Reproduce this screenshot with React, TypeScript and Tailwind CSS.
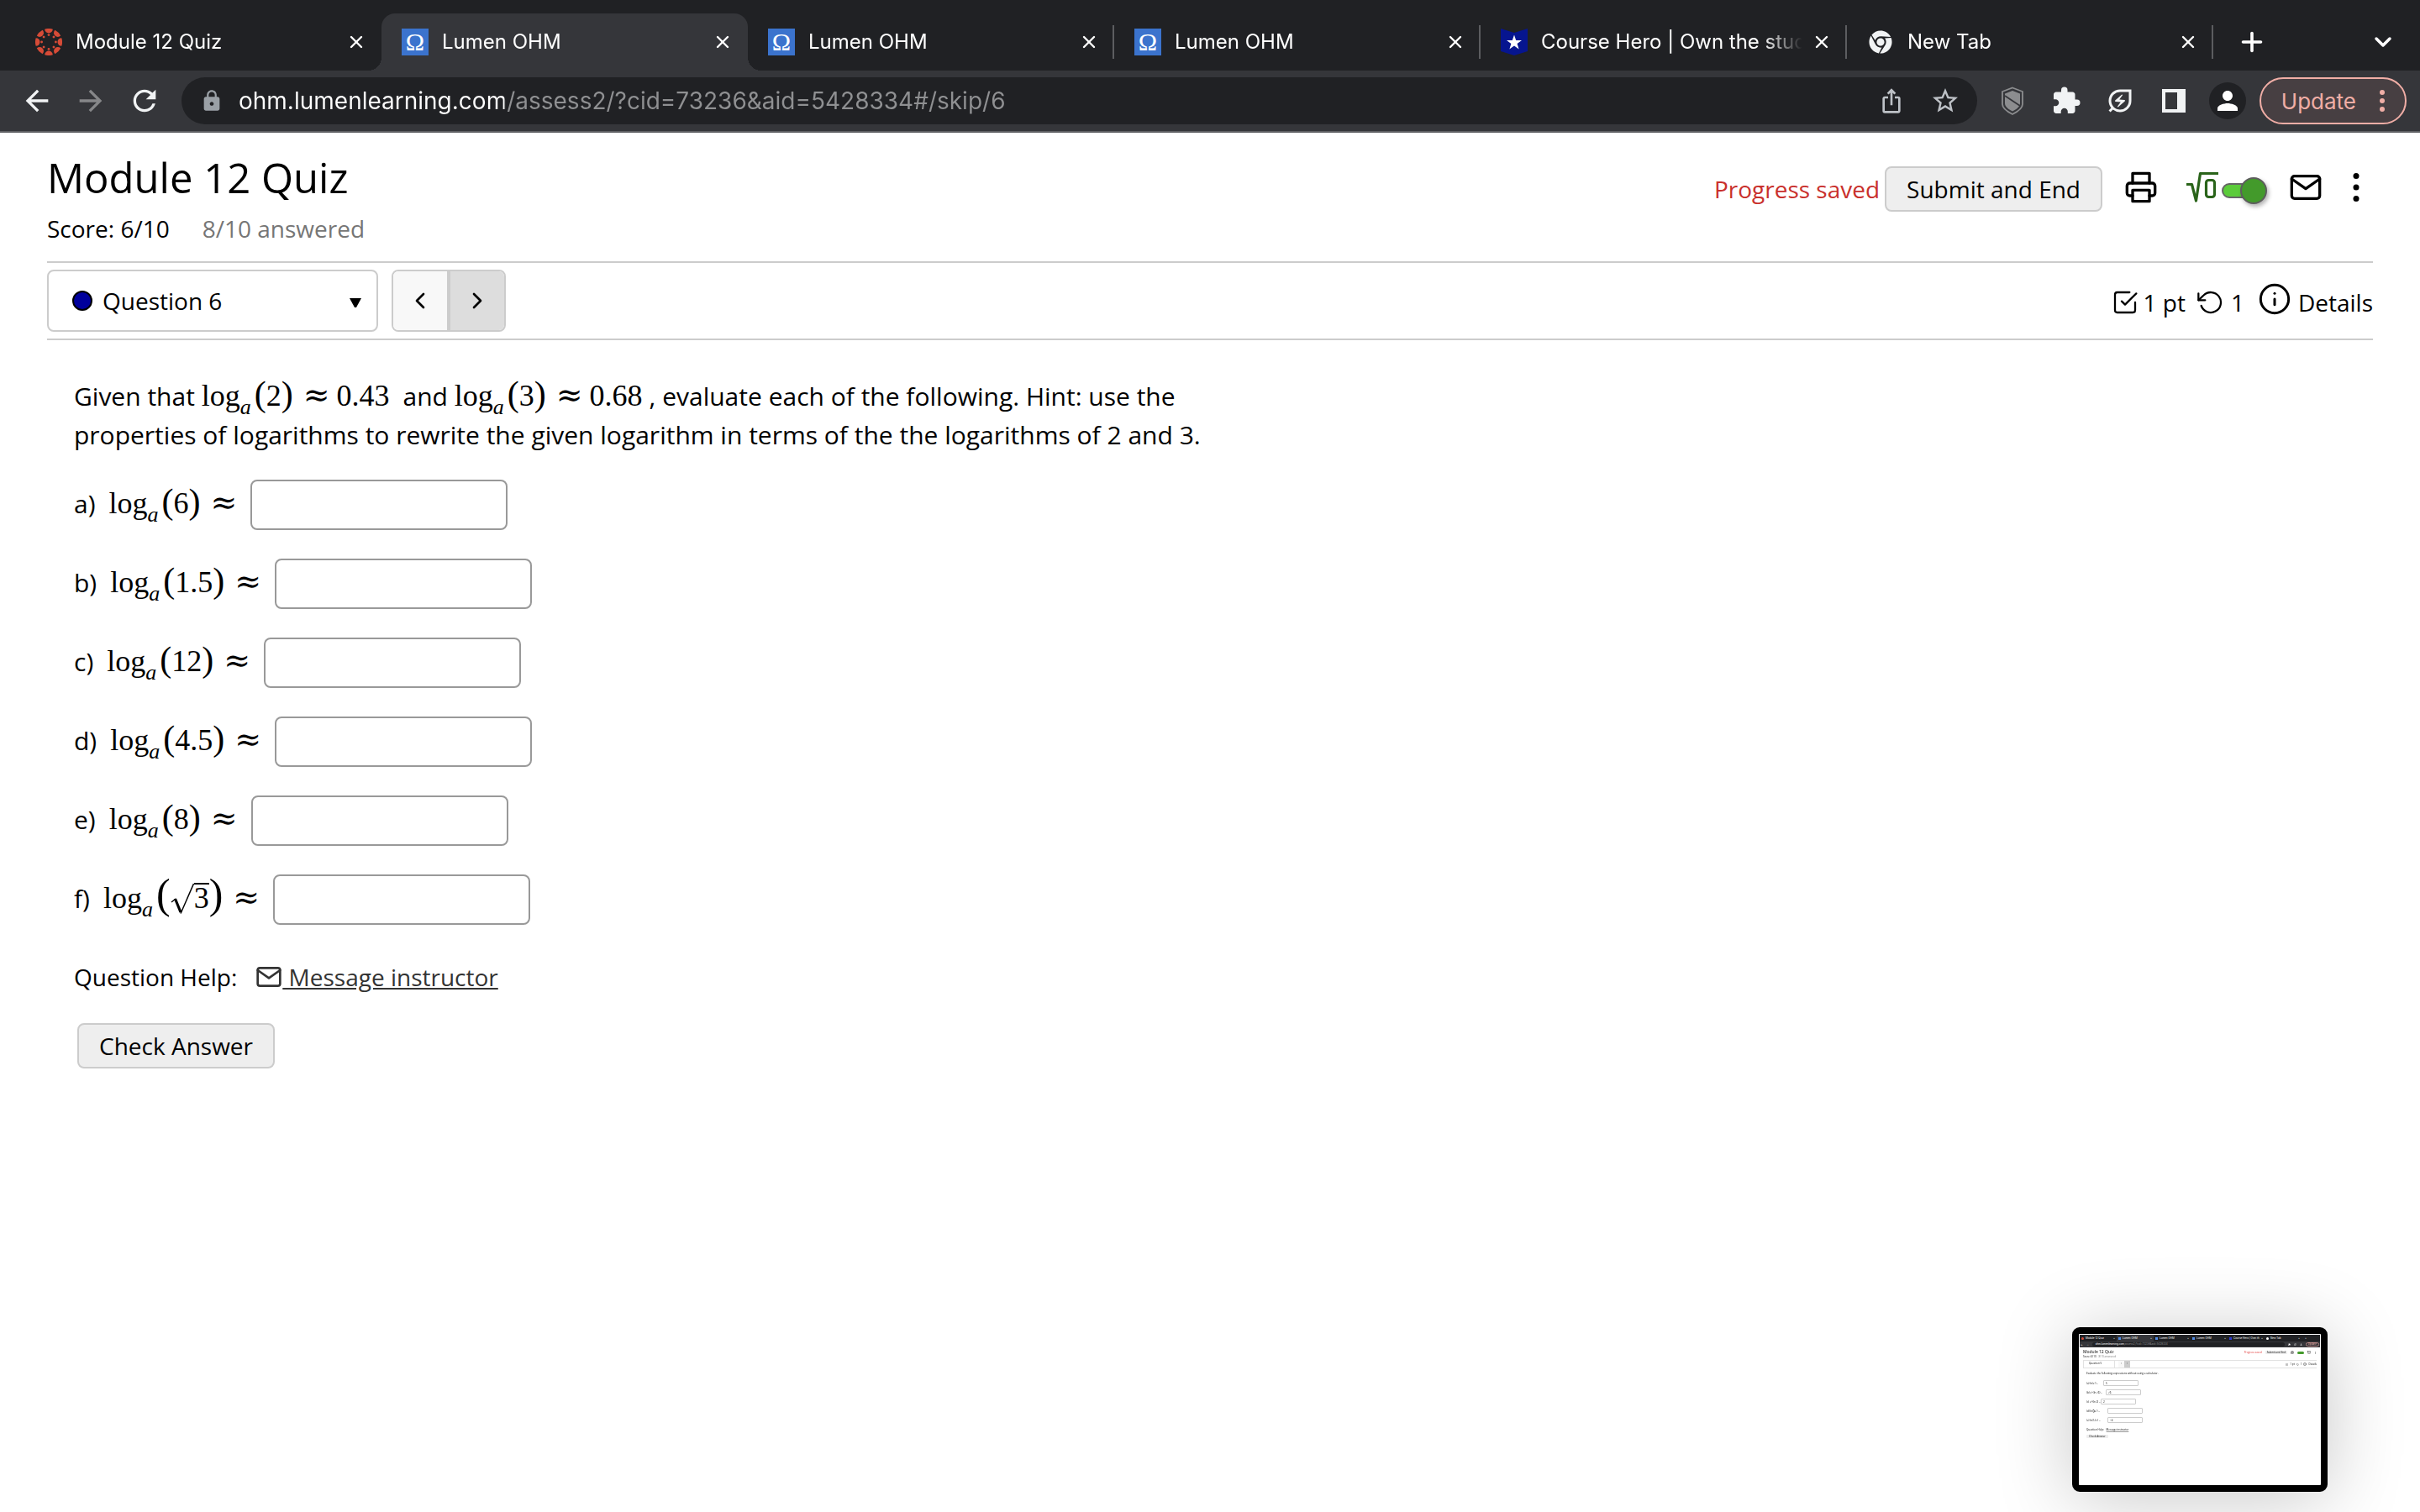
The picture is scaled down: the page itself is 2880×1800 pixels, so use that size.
import type { ReactNode } from "react";
import clsx from "clsx";
import { FaChrome } from "react-icons/fa";
import { FiCheckSquare, FiInfo, FiMail, FiPrinter, FiRotateCcw } from "react-icons/fi";
import {
  MdArrowBack,
  MdArrowForward,
  MdExtension,
  MdIosShare,
  MdLock,
  MdOutlineEnergySavingsLeaf,
  MdPerson,
  MdRefresh,
  MdStarBorder,
} from "react-icons/md";
import { ChevronDown, ChevronLeft, ChevronRight, Plus, X } from "lucide-react";

type TabType = {
  title: string;
  icon: "canvas" | "omega" | "hero" | "chrome";
  active?: boolean;
};

const tabs: TabType[] = [
  { title: "Module 12 Quiz", icon: "canvas" },
  { title: "Lumen OHM", icon: "omega", active: true },
  { title: "Lumen OHM", icon: "omega" },
  { title: "Lumen OHM", icon: "omega" },
  { title: "Course Hero | Own the stud", icon: "hero" },
  { title: "New Tab", icon: "chrome" },
];

const parts: { label: string; arg: ReactNode; tall?: boolean }[] = [
  { label: "a", arg: "6" },
  { label: "b", arg: "1.5" },
  { label: "c", arg: "12" },
  { label: "d", arg: "4.5" },
  { label: "e", arg: "8" },
  { label: "f", arg: <Root>3</Root>, tall: true },
];

function CanvasLogo() {
  const angles = [0, 45, 90, 135, 180, 225, 270, 315];
  return (
    <svg viewBox="-16 -16 32 32" className="size-8 shrink-0 fill-[#d64b37]">
      {angles.map((a) => (
        <g key={a} transform={`rotate(${a})`}>
          <path d="M-4.8 -15.3A16 16 0 0 1 4.8 -15.3A4.8 4.8 0 0 1 -4.8 -15.3Z" />
          <circle cx="0" cy="-8.4" r="1.4" />
        </g>
      ))}
    </svg>
  );
}

function Favicon({ icon }: { icon: TabType["icon"] }) {
  if (icon === "canvas") return <CanvasLogo />;
  if (icon === "chrome")
    return <FaChrome className="size-7 mx-0.5 shrink-0 text-[#f1f3f4]" />;
  if (icon === "hero")
    return (
      <svg viewBox="0 0 32 32" className="size-8 shrink-0">
        <path d="M0 0L16 5L32 0V27L16 32L0 27Z" fill="#06158f" />
        <path
          d="M16 7.500L18.200 14H25L19.600 18L21.600 24.500L16 20.600L10.400 24.500L12.400 18L7 14H13.800Z"
          fill="#fff"
        />
      </svg>
    );
  return (
    <span className="size-8 shrink-0 bg-[#3b73cd] text-white text-[30px] leading-8 text-center font-['Liberation_Serif',serif]">
      Ω
    </span>
  );
}

function Tab({ tab, divider }: { tab: TabType; divider: boolean }) {
  return (
    <div
      className={clsx(
        "relative flex-1 max-w-[436px] min-w-0 flex items-center pl-6 text-white",
        tab.active && "bg-[#35363a] rounded-t-2xl"
      )}
    >
      {tab.active && (
        <>
          <span className="absolute bottom-0 -left-4 size-4 bg-[radial-gradient(circle_at_0_0,transparent_16px,#35363a_16px)]" />
          <span className="absolute bottom-0 -right-4 size-4 bg-[radial-gradient(circle_at_100%_0,transparent_16px,#35363a_16px)]" />
        </>
      )}
      <Favicon icon={tab.icon} />
      <span className="flex-1 min-w-0 ml-4 mr-2 whitespace-nowrap text-2xl [mask-image:linear-gradient(to_right,black_84%,transparent_99%)]">
        {tab.title}
      </span>
      <button aria-label="Close tab">
        <X className="size-6" strokeWidth={2.4} />
      </button>
      <span className={clsx("ml-4 w-0.5 h-10", divider && "bg-[#5c5d60]")} />
    </div>
  );
}

function BrowserBar() {
  return (
    <header className="font-[Inter,sans-serif]">
      <div className="flex h-[84px] pt-4 pl-[18px] pr-7 bg-[#202124]">
        {tabs.map((tab, i) => (
          <Tab key={i} tab={tab} divider={i > 1} />
        ))}
        <button className="ml-7 text-white" aria-label="New tab">
          <Plus className="size-9" strokeWidth={2.4} />
        </button>
        <button className="ml-auto text-white" aria-label="Search tabs">
          <ChevronDown className="size-8" strokeWidth={2.6} />
        </button>
      </div>
      <div className="flex items-center h-[74px] px-4 bg-[#35363a] border-b-2 border-[#5f6063] text-[#f1f3f4]">
        <nav className="flex items-center gap-6 px-2 text-[40px]">
          <button aria-label="Back">
            <MdArrowBack />
          </button>
          <button aria-label="Forward" className="text-[#868789]">
            <MdArrowForward />
          </button>
          <button aria-label="Reload">
            <MdRefresh />
          </button>
        </nav>
        <div className="flex-1 flex items-center h-14 ml-4 pl-5 pr-5 rounded-full bg-[#202124] text-[#bdc1c6]">
          <MdLock className="size-7 ml-0.5 text-[#9aa0a6]" />
          <input
            type="text"
            aria-label="Address and search bar"
            defaultValue="ohm.lumenlearning.com/assess2/?cid=73236&aid=5428334#/skip/6"
            className="flex-1 h-14 ml-4.5 text-[28px] outline-none text-transparent bg-clip-text bg-[linear-gradient(to_right,white_316px,#8f9092_316px)]"
          />
          <button aria-label="Share">
            <MdIosShare className="size-8" />
          </button>
          <button aria-label="Bookmark" className="ml-7.5">
            <MdStarBorder className="size-9" />
          </button>
        </div>
        <div className="flex items-center gap-7 ml-6">
          <button aria-label="Shield">
            <svg viewBox="0 0 36 36" className="size-9">
              <path
                d="M18 2.500L30 7V22C30 27 24 31 18 34C12 31 6 27 6 22V7Z"
                fill="none"
                stroke="#8c8d8f"
                strokeWidth="1.800"
              />
              <path d="M18 6L27 9.400V21C27 25 23 28 18 30.500C13 28 9 25 9 21V9.400Z" fill="#8c8d8f" />
              <path d="M9 12L27 24" stroke="#35363a" strokeWidth="1.800" />
            </svg>
          </button>
          <button aria-label="Extensions">
            <MdExtension className="size-9" />
          </button>
          <button aria-label="Energy saver">
            <MdOutlineEnergySavingsLeaf className="size-9" />
          </button>
          <button aria-label="Side panel">
            <svg viewBox="0 0 36 36" className="size-9">
              <path d="M4 4H32V32H4ZM8 8V28H22V8Z" fill="#f1f3f4" fillRule="evenodd" />
            </svg>
          </button>
        </div>
        <button
          aria-label="Profile"
          className="flex items-center justify-center size-11 ml-6 rounded-full bg-[#202124] text-white"
        >
          <MdPerson className="size-9" />
        </button>
        <button className="flex items-center gap-7 h-14 ml-4 px-6 rounded-full border-2 border-[#f0aea6] bg-[#473f42] text-[#f0aea6] text-[26px]">
          Update
          <svg viewBox="0 0 6 28" className="w-1.5 h-7 fill-current">
            <circle cx="3" cy="4" r="3" />
            <circle cx="3" cy="14" r="3" />
            <circle cx="3" cy="24" r="3" />
          </svg>
        </button>
      </div>
    </header>
  );
}

function Root({ children }: { children: ReactNode }) {
  return (
    <span className="inline-flex items-baseline">
      <svg viewBox="0 0 28 38" className="self-end w-7 h-[38px] -mb-1" fill="none" stroke="currentColor">
        <path d="M1 23L6 19" strokeWidth="1.500" />
        <path d="M5.500 19L12 35" strokeWidth="3.200" />
        <path d="M12 36.500L27.500 1" strokeWidth="1.500" />
      </svg>
      <span className="border-t-2 border-black leading-8">{children}</span>
    </span>
  );
}

function Log({ children, tall }: { children: ReactNode; tall?: boolean }) {
  const paren = tall ? "text-[50px]" : "text-[42px]";
  return (
    <span className="inline-flex items-baseline leading-8 whitespace-nowrap font-['Liberation_Serif',serif] text-4xl">
      log
      <sub className="relative top-2.5 bottom-auto leading-none text-[26px] italic">a</sub>
      <span className={clsx("ml-1 leading-8", paren)}>(</span>
      {children}
      <span className={clsx("leading-8", paren)}>)</span>
      <span className="ml-3 font-['DejaVu_Serif',serif] text-[38px] leading-8">≈</span>
    </span>
  );
}

function Toolbar() {
  return (
    <div className="flex items-center text-[28px]">
      <span className="text-[#c9302c]">Progress saved</span>
      <button className="h-[54px] ml-1.5 px-6 rounded-lg border-2 border-[#ccc] bg-[#eee]">
        Submit and End
      </button>
      <button aria-label="Print" className="ml-6.5 pb-1">
        <FiPrinter className="size-10" />
      </button>
      <label className="flex items-center ml-8.5 pb-1">
        <svg viewBox="0 0 38 38" className="size-[38px]" fill="none" stroke="#2a641a" strokeWidth="3.200">
          <path d="M0 15.500H6.500L11.500 35L16.500 2.500H38" strokeLinejoin="round" />
          <rect x="23.500" y="10.500" width="10" height="20" rx="3" />
        </svg>
        <input
          type="checkbox"
          role="switch"
          defaultChecked
          aria-label="Enhanced math entry"
          className="sr-only"
        />
        <span className="flex items-center justify-end w-[46px] h-[18px] mt-2 ml-1 rounded-full border-2 border-[#666] bg-[#5bcb3a]">
          <span className="size-8 -mr-2.5 shrink-0 rounded-full border-2 border-[#5d5d5d] bg-[#439a2b] shadow-[2px_3px_5px_rgba(0,0,0,0.3)]" />
        </span>
      </label>
      <button aria-label="Messages" className="ml-8.5 pb-1">
        <FiMail className="size-10" />
      </button>
      <button aria-label="More options" className="ml-9 mr-4 pb-1">
        <svg viewBox="0 0 8 36" className="w-2 h-9 fill-black">
          <circle cx="4" cy="4.500" r="3.500" />
          <circle cx="4" cy="18" r="3.500" />
          <circle cx="4" cy="31.500" r="3.500" />
        </svg>
      </button>
    </div>
  );
}

function QuestionNav() {
  return (
    <div className="flex items-center h-[94px] border-y-2 border-[#ccc] text-[28px]">
      <div className="relative">
        <select
          aria-label="Question"
          className="w-[394px] h-[74px] pl-16 rounded-lg border-2 border-[#ccc] bg-white appearance-none"
        >
          <option>Question 6</option>
        </select>
        <span className="absolute left-[30px] top-[25px] size-6 rounded-full border-2 border-black bg-[#00009c] pointer-events-none" />
        <svg viewBox="0 0 14 11" className="absolute right-5 top-[34px] w-3.5 pointer-events-none">
          <path d="M0 0H14L8 11H6Z" />
        </svg>
      </div>
      <div className="flex ml-4 h-[74px] rounded-lg border-2 border-[#ccc] overflow-hidden">
        <button
          aria-label="Previous question"
          className="flex items-center justify-center w-[68px] bg-[#f8f8f8] border-r-4 border-[#ccc]"
        >
          <ChevronLeft className="size-8" strokeWidth={2} />
        </button>
        <button
          aria-label="Next question"
          className="flex items-center justify-center w-[64px] bg-[#ddd]"
        >
          <ChevronRight className="size-8" strokeWidth={2} />
        </button>
      </div>
      <div className="flex items-center ml-auto pt-1">
        <FiCheckSquare className="size-8" strokeWidth={1.7} />
        <span className="ml-1.5">1 pt</span>
        <FiRotateCcw className="size-8 ml-3.5" strokeWidth={1.7} />
        <span className="ml-2">1</span>
        <button className="flex items-center ml-4">
          <FiInfo className="size-10 mb-2" strokeWidth={1.8} />
          <span className="ml-2">Details</span>
        </button>
      </div>
    </div>
  );
}

function MiniRow({ label, value, className }: { label: string; value?: string; className: string }) {
  return (
    <div className="flex items-center h-[11px] gap-1">
      <span className={className}>{label}</span>
      <span className="w-[42px] h-[7px] pl-0.5 leading-[6px] border border-[#ccc] rounded-[1px]">
        {value}
      </span>
    </div>
  );
}

// floating screen capture preview in the corner of the desktop
function Preview() {
  return (
    <aside className="fixed right-[110px] bottom-6 w-[304px] h-[196px] border-8 border-black rounded-[9px] bg-white shadow-[0_8px_90px_rgba(0,0,0,0.22)] text-[3px] leading-[4px]">
      <div className="m-px">
        <div className="flex h-2 bg-[#202124] text-white leading-[8px] font-[Inter,sans-serif]">
          {tabs.map((tab, i) => (
            <span
              key={i}
              className={clsx("flex items-center w-11 px-0.5 gap-0.5", i === 1 && "bg-[#35363a]")}
            >
              <span
                className={clsx("size-[3px] shrink-0", {
                  "bg-[#d64b37] rounded-full": tab.icon === "canvas",
                  "bg-[#4f8be6]": tab.icon === "omega",
                  "bg-[#2c3bd0]": tab.icon === "hero",
                  "bg-white rounded-full": tab.icon === "chrome",
                })}
              />
              <span className="flex-1 whitespace-nowrap">{tab.title.slice(0, 20)}</span>
              <span>×</span>
            </span>
          ))}
          <span className="ml-1">+</span>
        </div>
        <div className="flex items-center h-[7px] px-px gap-1 bg-[#35363a] text-white font-[Inter,sans-serif]">
          <span>←</span>
          <span className="text-[#868789]">→</span>
          <span className="flex-1 h-[5px] pl-1 rounded-full bg-[#202124]">
            ohm.lumenlearning.com
            <span className="text-[#8f9092]">/assess2/?cid=73236&amp;aid=5428334</span>
          </span>
          <MdExtension className="size-[3px]" />
          <MdOutlineEnergySavingsLeaf className="size-[3px]" />
          <MdPerson className="size-[3px]" />
          <span className="px-0.5 rounded-full border border-[#b08080] leading-[3px] text-[#f0aea6]">
            Update
          </span>
        </div>
        <div className="px-1">
          <div className="flex justify-between pt-0.5">
            <div>
              <div className="text-[5px] leading-[7px]">Module 12 Quiz</div>
              <div>
                Score: 6/10 <span className="ml-0.5 text-[#777]">8/10 answered</span>
              </div>
            </div>
            <div className="flex items-center gap-1 h-2">
              <span className="text-[#e03030]">Progress saved</span>
              <span className="px-0.5 rounded-[1px] bg-[#eee]">Submit and End</span>
              <FiPrinter className="size-1" />
              <span className="w-2 h-[3px] bg-[#439a2b] rounded-full" />
              <FiMail className="size-1" />
              <span>⋮</span>
            </div>
          </div>
          <div className="flex items-center h-[10px] mt-0.5 border-y border-[#e2e2e2]">
            <span className="w-[38px] h-2 pl-1.5 leading-[7px] border-x border-[#e2e2e2]">
              Question 5
            </span>
            <span className="flex ml-1 h-2 leading-[7px]">
              <span className="w-[7px] text-center bg-[#f8f8f8]">‹</span>
              <span className="w-[7px] text-center bg-[#ccc]">›</span>
            </span>
            <span className="flex items-center gap-0.5 ml-auto">
              <FiCheckSquare className="size-[3px]" />1 pt
              <FiRotateCcw className="size-[3px]" />1
              <FiInfo className="size-1" />
              Details
            </span>
          </div>
          <div className="px-1">
            <p className="mt-1 mb-1">
              Evaluate the following expressions without using a calculator.
            </p>
            <MiniRow label="(a) ln(e⁵) =" value="5" className="w-[16px] whitespace-nowrap" />
            <MiniRow label="(b) e^(ln √6) =" value="√6" className="w-[19px] whitespace-nowrap" />
            <MiniRow label="(c) e^(ln 2) =" value="2" className="w-[13px] whitespace-nowrap" />
            <MiniRow label="(d) ln(∛e²) =" className="w-[21px] whitespace-nowrap" />
            <MiniRow label="(e) ln(1/e⁴) =" value="−4" className="w-[21px] whitespace-nowrap" />
            <p className="mt-1">
              Question Help: <span className="ml-0.5 underline decoration-[#999]">Message instructor</span>
            </p>
            <span className="inline-block mt-1 px-[3px] rounded-[1px] bg-[#eee]">Check Answer</span>
          </div>
        </div>
      </div>
    </aside>
  );
}

export default function App() {
  return (
    <div className="min-h-screen bg-white text-black font-['Open_Sans',sans-serif]">
      <BrowserBar />
      <main className="px-14">
        <div className="flex justify-between h-[153px]">
          <div className="pt-[19px]">
            <h1 className="text-[49px] leading-[68px]">Module 12 Quiz</h1>
            <p className="flex gap-[39px] text-[28px] leading-[54px]">
              <span>Score: 6/10</span>
              <span className="text-[#767676]">8/10 answered</span>
            </p>
          </div>
          <div className="pt-10 h-[94px] flex">
            <Toolbar />
          </div>
        </div>
        <QuestionNav />
        <section className="px-8 pt-11 text-[30px]">
          <p className="leading-[46px]">
            Given that <Log>2</Log>
            <span className="ml-2 mr-4 font-['Liberation_Serif',serif] text-4xl leading-8">0.43</span>
            and <Log>3</Log>
            <span className="ml-2 mr-2 font-['Liberation_Serif',serif] text-4xl leading-8">0.68</span>
            , evaluate each of the following. Hint: use the
            <br />
            properties of logarithms to rewrite the given logarithm in terms of the the logarithms of 2
            and 3.
          </p>
          <div className="flex flex-col gap-[34px] mt-[30px]">
            {parts.map(({ label, arg, tall }) => (
              <label key={label} className="flex items-center h-[60px]">
                <span className="flex items-baseline gap-4 pb-1">
                  <span>{label})</span>
                  <Log tall={tall}>{arg}</Log>
                </span>
                <input
                  type="text"
                  className="w-[306px] h-[60px] ml-4 px-3 rounded-lg border-2 border-[#999]"
                />
              </label>
            ))}
          </div>
          <div className="flex items-center mt-[42px] text-[28px] leading-10">
            <span>Question Help:</span>
            <a href="#message" className="flex items-center ml-5.5 text-[#333]">
              <FiMail className="size-8" />
              <span className="underline whitespace-pre"> Message instructor</span>
            </a>
          </div>
          <button className="h-[54px] mt-[35px] ml-1 px-6 rounded-lg border-2 border-[#ccc] bg-[#eee] text-[28px]">
            Check Answer
          </button>
        </section>
      </main>
      <Preview />
    </div>
  );
}
